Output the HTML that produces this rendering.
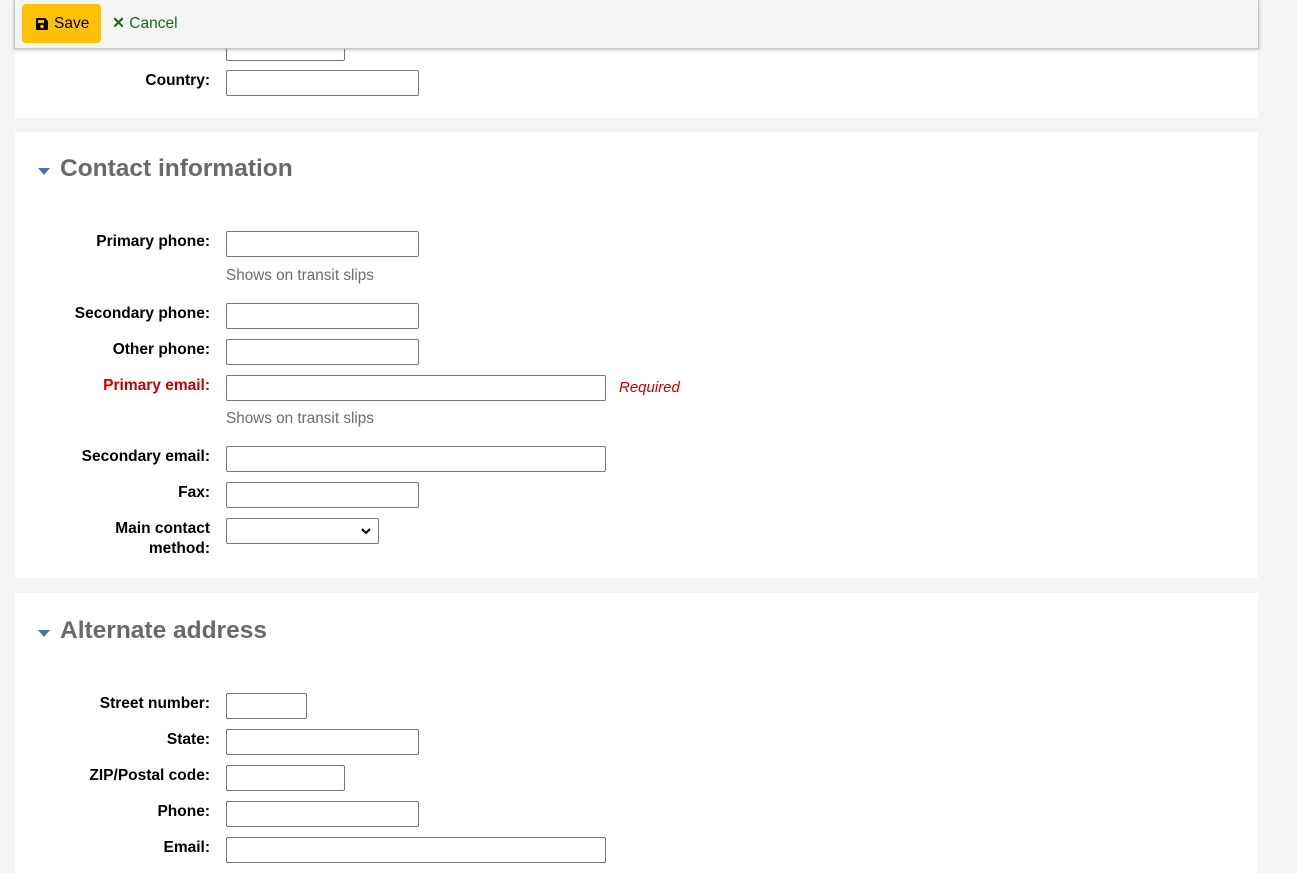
<!DOCTYPE html>
<html><head><meta charset="utf-8"><style>
body{margin:0;width:1297px;height:862px;background:#f3f4f4;overflow:hidden;position:relative;font-family:"Liberation Sans",sans-serif;}
.p{position:absolute;left:15px;width:1243px;background:#fff;}
.l{position:absolute;right:1087px;font-size:15.5px;font-weight:bold;color:#000;white-space:nowrap;text-align:right;line-height:20px;}
.i{position:absolute;left:226px;height:24px;border:1px solid #767676;border-radius:2px;background:#fff;box-sizing:content-box;}
.h{position:absolute;left:60px;font-size:24.5px;font-weight:bold;color:#696969;}
.tri{position:absolute;left:38px;width:0;height:0;border-left:6px solid transparent;border-right:6px solid transparent;border-top:7px solid #4a76a8;}
.hint{position:absolute;left:226px;font-size:15.3px;color:#6c6c6c;}
</style></head><body>
<div class="p" style="top:0;height:118px"></div>
<div class="p" style="top:132px;height:446px"></div>
<div class="p" style="top:593px;height:280px"></div>

<div class="l" style="top:34px">ZIP/Postal code:</div><div class="i" style="top:35px;width:117px"></div>
<div class="l" style="top:71px">Country:</div><div class="i" style="top:70px;width:191px"></div>

<div class="tri" style="top:168px"></div><div class="h" style="top:155px">Contact information</div>
<div class="l" style="top:232px">Primary phone:</div><div class="i" style="top:231px;width:191px"></div>
<div class="hint" style="top:267px">Shows on transit slips</div>
<div class="l" style="top:304px">Secondary phone:</div><div class="i" style="top:303px;width:191px"></div>
<div class="l" style="top:340px">Other phone:</div><div class="i" style="top:339px;width:191px"></div>
<div class="l" style="top:376px;color:#c00">Primary email:</div><div class="i" style="top:375px;width:378px"></div>
<div style="position:absolute;left:619px;top:379px;font-size:15px;font-style:italic;color:#c00">Required</div>
<div class="hint" style="top:410px">Shows on transit slips</div>
<div class="l" style="top:447px">Secondary email:</div><div class="i" style="top:446px;width:378px"></div>
<div class="l" style="top:483px">Fax:</div><div class="i" style="top:482px;width:191px"></div>
<div class="l" style="top:519px">Main contact<br>method:</div><div class="i" style="top:518px;width:151px"><svg style="position:absolute;right:7px;top:8px" width="10" height="8" viewBox="0 0 10 8"><path d="M1 2l4 4 4-4" stroke="#000" stroke-width="2" fill="none"/></svg></div>

<div class="tri" style="top:630px"></div><div class="h" style="top:617px">Alternate address</div>
<div class="l" style="top:694px">Street number:</div><div class="i" style="top:693px;width:79px"></div>
<div class="l" style="top:730px">State:</div><div class="i" style="top:729px;width:191px"></div>
<div class="l" style="top:766px">ZIP/Postal code:</div><div class="i" style="top:765px;width:117px"></div>
<div class="l" style="top:802px">Phone:</div><div class="i" style="top:801px;width:191px"></div>
<div class="l" style="top:838px">Email:</div><div class="i" style="top:837px;width:378px"></div>

<div style="position:absolute;left:14px;top:-1px;width:1243px;height:48px;background:#f3f4f4;border:1px solid #c4c4c4;box-shadow:0 1px 3px rgba(0,0,0,.25)">
<div style="position:absolute;left:7px;top:4px;width:79px;height:39px;background:#ffc107;border-radius:4px;font-size:15.5px;line-height:39px;color:#000">
<svg style="position:absolute;left:13px;top:13px" width="14" height="14" viewBox="0 0 14 14"><path d="M1 2a1 1 0 0 1 1-1h8l3 3v8a1 1 0 0 1-1 1H2a1 1 0 0 1-1-1z" fill="#000"/><rect x="3" y="3" width="6" height="3" fill="#ffc107"/><circle cx="7" cy="9.5" r="1.8" fill="#ffc107"/></svg>
<span style="position:absolute;left:32px">Save</span></div>
<div style="position:absolute;left:97px;top:4px;line-height:39px;font-size:15.5px;color:#1b6a1b"><b>✕</b> Cancel</div>
</div>
</body></html>
